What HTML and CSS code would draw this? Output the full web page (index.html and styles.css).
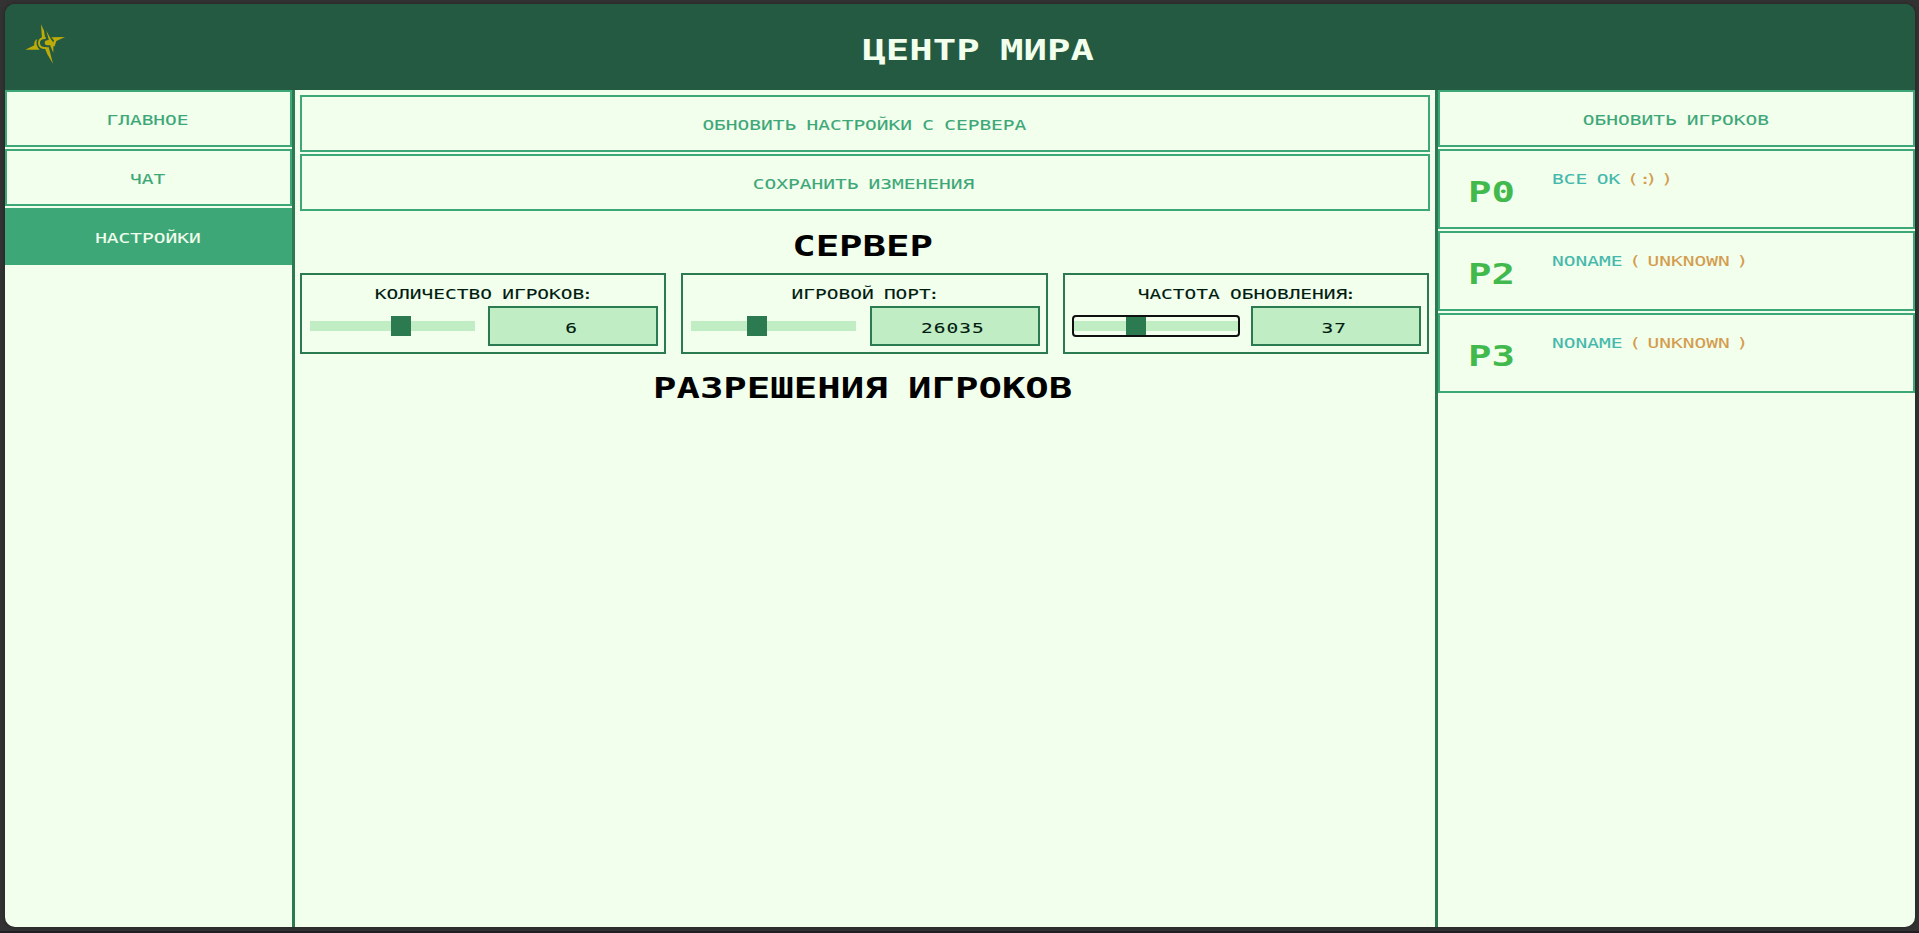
FILE: index.html
```html
<!DOCTYPE html>
<html lang="ru">
<head>
<meta charset="utf-8">
<title>Центр мира</title>
<link rel="stylesheet" href="styles.css">
</head>
<body>
<div class="window">
  <header class="header">
    <svg class="logo" viewBox="75 72 120 120">
      <path class="logo-edge" d="M123 73L132 92L135 112L126 117Z M139 92L152 116L160 128L160 158L152 140Z M195 111L169 123L164 139L156 137L162 121L154 112Z M76 149L103 136C101 128 105 120 112 117C107 129 110 140 119 149Z M134 143L146 141L159 191L142 163Z"/>
      <path class="logo-ring" d="M137 114C125 113 116 119 117 129C117 140 126 146 140 143"/>
      <ellipse class="logo-core" cx="146" cy="128" rx="12" ry="8"/>
    </svg>
    <h1 class="title"><span class="wide">ЦЕНТР МИРА</span></h1>
  </header>
  <div class="columns">
    <nav class="menu">
      <button class="btn"><span class="wide">ГЛАВНОЕ</span></button>
      <button class="btn"><span class="wide">ЧАТ</span></button>
      <button class="btn active"><span class="wide">НАСТРОЙКИ</span></button>
    </nav>
    <main class="settings">
      <button class="btn"><span class="wide">ОБНОВИТЬ НАСТРОЙКИ С СЕРВЕРА</span></button>
      <button class="btn"><span class="wide">СОХРАНИТЬ ИЗМЕНЕНИЯ</span></button>
      <h2 class="section"><span class="wide">СЕРВЕР</span></h2>
      <div class="cards">
        <div class="card">
          <div class="label"><span class="wide">КОЛИЧЕСТВО ИГРОКОВ<span class="thin">:</span></span></div>
          <div class="control">
            <div class="slider"><div class="thumb" style="margin-left:81px"></div></div>
            <div class="value"><span class="wide">6</span></div>
          </div>
        </div>
        <div class="card">
          <div class="label"><span class="wide">ИГРОВОЙ ПОРТ<span class="thin">:</span></span></div>
          <div class="control">
            <div class="slider"><div class="thumb" style="margin-left:56px"></div></div>
            <div class="value"><span class="wide">26035</span></div>
          </div>
        </div>
        <div class="card">
          <div class="label"><span class="wide">ЧАСТОТА ОБНОВЛЕНИЯ<span class="thin">:</span></span></div>
          <div class="control">
            <div class="slider focused"><div class="thumb" style="margin-left:52px"></div></div>
            <div class="value"><span class="wide">37</span></div>
          </div>
        </div>
      </div>
      <h2 class="section second"><span class="wide">РАЗРЕШЕНИЯ ИГРОКОВ</span></h2>
    </main>
    <aside class="players">
      <button class="btn"><span class="wide">ОБНОВИТЬ ИГРОКОВ</span></button>
      <div class="player">
        <div class="slot"><span class="wide">P0</span></div>
        <div class="name"><span class="wide">ВСЕ ОК <span class="status"><span class="thin">(</span> <span class="smile">:)</span> <span class="thin">)</span></span></span></div>
      </div>
      <div class="player">
        <div class="slot"><span class="wide">P2</span></div>
        <div class="name"><span class="wide">NONAME <span class="status"><span class="thin">(</span> UNKNOWN <span class="thin">)</span></span></span></div>
      </div>
      <div class="player">
        <div class="slot"><span class="wide">P3</span></div>
        <div class="name"><span class="wide">NONAME <span class="status"><span class="thin">(</span> UNKNOWN <span class="thin">)</span></span></span></div>
      </div>
    </aside>
  </div>
</div>
</body>
</html>
```
FILE: styles.css
```css
* { box-sizing: border-box; }

body {
  margin: 0;
  height: 933px;
  padding: 4px 4px 6px 5px;
  overflow: hidden;
  background: #333;
  border-bottom: 2px solid #1f1e24;
  font: 14px/16px "DejaVu Sans Mono", monospace;
  color: #001c10;
}

.window {
  height: 923px;
  display: flex;
  flex-direction: column;
  overflow: hidden;
  border-radius: 10px;
  background: linear-gradient(#245a42 80px, #f2ffed 80px);
  box-shadow: 0 0 4px #222;
}

/* Extended letterforms: the mono face stretched horizontally */
.wide {
  display: inline-block;
  white-space: nowrap;
  word-spacing: -1.1px;
  transform: scaleX(1.392);
  -webkit-text-stroke: 0.1px currentColor;
}

.thin { margin: 0 -2.1px; }
.smile { margin: 0 2px 0 -4.5px; letter-spacing: -4px; }

.header {
  flex: none;
  height: 86px;
  display: flex;
  align-items: center;
  padding: 0 23px 0 20px;
  background: #245a42;
  color: #f2ffed;
}

.logo { width: 40px; height: 40px; margin-bottom: 7px; }
.logo-edge, .logo-core { fill: #bcab08; }
.logo-ring { fill: none; stroke: #bcab08; stroke-width: 6; }

.title {
  flex: 1;
  margin: 8px 0 0;
  text-align: center;
  font-size: 28px;
  line-height: 32px;
}

.columns { flex: 1; display: flex; }

.menu, .players, .settings {
  display: flex;
  flex-direction: column;
  gap: 2px;
}

.menu { width: 290px; border-right: 3px solid #2c7a50; }
.settings { width: 1140px; padding: 5px; }
.players { width: 480px; border-left: 3px solid #2c7a50; }

.btn {
  flex: none;
  height: 57px;
  padding: 2px 2px 0 0;
  border: 2px solid #3da778;
  background: transparent;
  color: #3da778;
  font: inherit;
}

.btn.active { background: #3da778; color: #f2ffed; }

.section {
  height: 58px;
  margin: 0;
  padding: 18px 5px 0 0;
  text-align: center;
  font-size: 28px;
  line-height: 32px;
  color: #000;
}

.section .wide, .title .wide { word-spacing: -2.2px; -webkit-text-stroke: 0; }

.section.second { padding-top: 17px; }

.cards {
  display: grid;
  grid-template-columns: repeat(3, 1fr);
  gap: 15px;
  margin-right: 1px;
}

.card {
  height: 81px;
  padding: 11px 6px 0 8px;
  border: 2px solid #2c7a50;
}

.label { height: 20px; padding-right: 3px; text-align: center; }

.control { display: flex; align-items: center; justify-content: space-between; }

.slider {
  width: 165px;
  height: 20px;
  background: linear-gradient(#c0edc3, #c0edc3) 0 5px / 100% 10px no-repeat;
}

.slider.focused {
  width: 164px;
  height: 18px;
  margin-left: 1px;
  background-position: 0 4px;
  outline: 2px solid #101010;
  border-radius: 2px;
}

.thumb { width: 20px; height: 100%; background: #2c7a50; }

.value {
  width: 170px;
  height: 40px;
  padding: 12px 3px 0 0;
  border: 2px solid #2c7a50;
  background: #c0edc3;
  text-align: center;
  letter-spacing: 0.7px;
}

.player {
  height: 80px;
  display: flex;
  border: 2px solid #3da778;
}

.player .wide { transform-origin: left; }

.slot {
  width: 112px;
  padding: 26px 0 0 28px;
  font-size: 28px;
  font-weight: bold;
  line-height: 32px;
  color: #42b94c;
}

.slot .wide { -webkit-text-stroke: 0; }

.name { padding-top: 20px; color: #43b8ab; }
.name .wide { word-spacing: -1.5px; }
.status { color: #d49b4c; }
```
